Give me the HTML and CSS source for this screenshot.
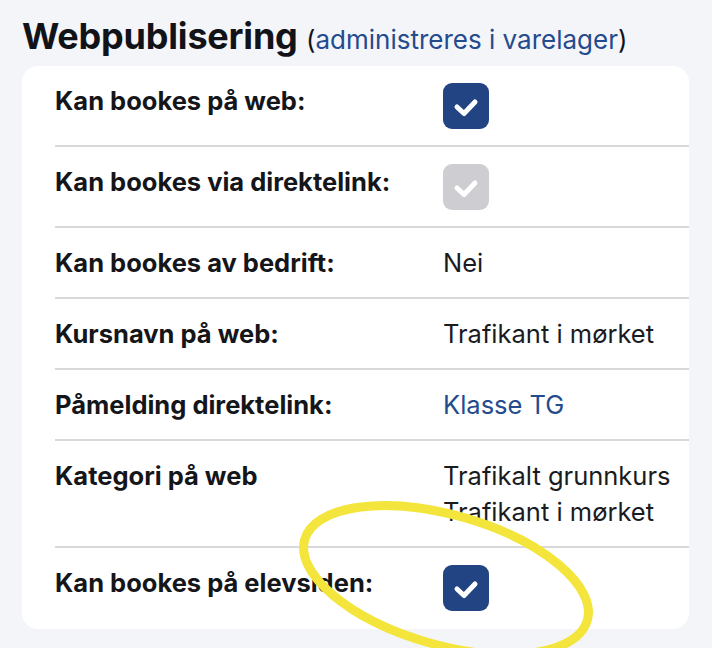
FILE: index.html
```html
<!DOCTYPE html>
<html lang="no">
<head>
<meta charset="utf-8">
<link rel="stylesheet" href="styles.css">
</head>
<body>
<div class="page">
  <h2 class="title">Webpublisering <span class="sub">(<a class="link" href="#">administreres i varelager</a>)</span></h2>
  <div class="card">
    <div class="row">
      <div class="label">Kan bookes på web:</div>
      <div class="value"><span class="check on"><svg viewBox="0 0 46 46" width="46" height="46"><path d="M14 24 L21 30.5 L32 19" fill="none" stroke="#fff" stroke-width="5" stroke-linecap="round" stroke-linejoin="round"/></svg></span></div>
    </div>
    <div class="row">
      <div class="label">Kan bookes via direktelink:</div>
      <div class="value"><span class="check off"><svg viewBox="0 0 46 46" width="46" height="46"><path d="M14 24 L21 30.5 L32 19" fill="none" stroke="#fff" stroke-width="5" stroke-linecap="round" stroke-linejoin="round"/></svg></span></div>
    </div>
    <div class="row">
      <div class="label">Kan bookes av bedrift:</div>
      <div class="value">Nei</div>
    </div>
    <div class="row">
      <div class="label">Kursnavn på web:</div>
      <div class="value">Trafikant i mørket</div>
    </div>
    <div class="row">
      <div class="label">Påmelding direktelink:</div>
      <div class="value"><a class="link" href="#">Klasse TG</a></div>
    </div>
    <div class="row">
      <div class="label">Kategori på web</div>
      <div class="value">Trafikalt grunnkurs<br>Trafikant i mørket</div>
    </div>
    <div class="row last">
      <div class="label">Kan bookes på elevsiden:</div>
      <div class="value"><span class="check on"><svg viewBox="0 0 46 46" width="46" height="46"><path d="M14 24 L21 30.5 L32 19" fill="none" stroke="#fff" stroke-width="5" stroke-linecap="round" stroke-linejoin="round"/></svg></span></div>
    </div>
  </div>
  <svg class="mark" viewBox="0 0 712 648" width="712" height="648">
    <ellipse cx="446" cy="580" rx="147" ry="65" transform="rotate(16 446 580)" fill="none" stroke="#f3e53b" stroke-width="9"/>
  </svg>
</div>
</body>
</html>
```
FILE: styles.css
```css
html, body {
  margin: 0;
  padding: 0;
  background: #f4f5f9;
}
body {
  font-family: Inter, "Noto Sans", sans-serif;
  color: #15161a;
}
.page {
  position: relative;
  width: 712px;
  height: 648px;
  overflow: hidden;
  box-sizing: border-box;
  padding: 14px 23px 0 22px;
}
.title {
  margin: 0 0 4px 0;
  font-size: 36px;
  line-height: 45px;
  font-weight: 700;
  letter-spacing: -0.2px;
  color: #121318;
}
.sub {
  font-size: 26px;
  font-weight: 400;
  letter-spacing: 0;
}
.link {
  color: #244b8d;
  text-decoration: none;
}
.card {
  background: #fff;
  border-radius: 16px;
  padding: 0 0 0 33px;
}
.row {
  display: flex;
  align-items: flex-start;
  padding: 17px 0 16px 0;
  border-bottom: 2px solid #d9d9dc;
  font-size: 25.5px;
  line-height: 36px;
}
.row.last {
  border-bottom: none;
  padding-bottom: 18px;
}
.label {
  width: 388px;
  flex: none;
  font-weight: 700;
  color: #15161a;
}
.value {
  font-weight: 400;
  color: #1a1b1f;
  white-space: nowrap;
}
.check {
  display: block;
  width: 46px;
  height: 46px;
  border-radius: 9px;
}
.check svg {
  display: block;
}
.check.on {
  background: #224482;
}
.check.off {
  background: #cdcdd2;
}
.mark {
  position: absolute;
  left: 0;
  top: 0;
  pointer-events: none;
}
```
